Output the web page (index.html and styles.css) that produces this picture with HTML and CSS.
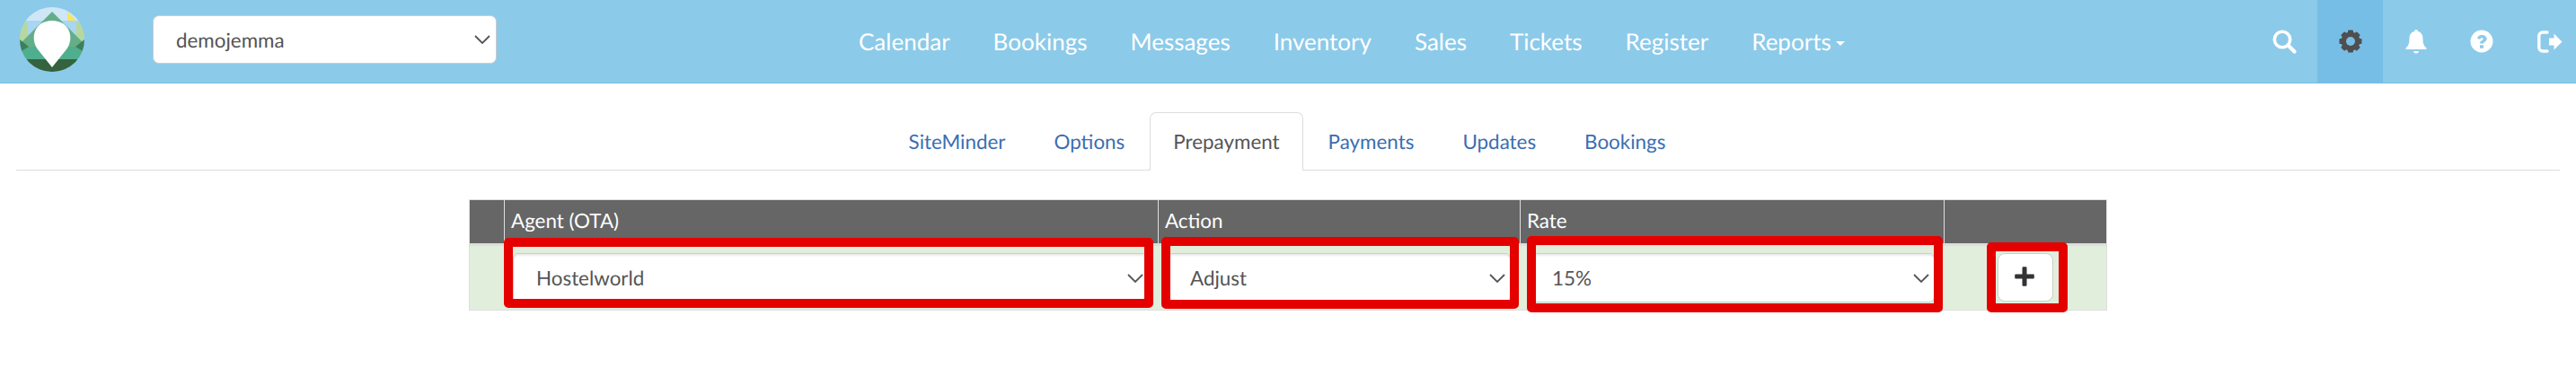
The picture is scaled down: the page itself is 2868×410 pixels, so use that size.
FILE: index.html
```html
<!DOCTYPE html>
<html lang="en">
<head>
<meta charset="utf-8">
<title>Prepayment</title>
<link rel="stylesheet" href="styles.css">
</head>
<body>
<header class="navbar">
  <svg class="logo" width="72" height="72" viewBox="0 0 72 72">
    <defs><clipPath id="logo-clip"><circle cx="36" cy="36" r="36"/></clipPath></defs>
    <g clip-path="url(#logo-clip)">
      <rect width="72" height="72" fill="#a9d6f2"/>
      <rect width="72" height="15" fill="#cfe6f7"/>
      <polygon points="53,5 62,14 62,15 53,15" fill="#f6e65a"/>
      <rect x="0" y="17" width="9" height="20" fill="#b7d89c"/>
      <rect x="63" y="17" width="9" height="20" fill="#b7d89c"/>
      <polygon points="36,5 72,41 72,72 0,72 0,41" fill="#63ae88"/>
      <rect x="0" y="44" width="72" height="20" fill="#4fae8d"/>
      <polygon points="0,36 10,44 0,50" fill="#3f7f58"/>
      <polygon points="72,36 62,44 72,50" fill="#3f7f58"/>
      <rect x="0" y="58" width="72" height="14" fill="#35633f"/>
      <path d="M36 67 L20 47 C11 35 16 15 36 15 C56 15 61 35 52 47 Z" fill="#fff"/>
    </g>
  </svg>
  <select class="site-select"><option>demojemma</option></select>
  <nav class="main-nav">
    <a class="main-link">Calendar</a>
    <a class="main-link">Bookings</a>
    <a class="main-link">Messages</a>
    <a class="main-link">Inventory</a>
    <a class="main-link">Sales</a>
    <a class="main-link">Tickets</a>
    <a class="main-link">Register</a>
    <a class="main-link">Reports<span class="caret"></span></a>
  </nav>
  <div class="icon-nav">
    <a class="icon-link">
      <svg width="27" height="27" viewBox="0 0 27 27"><circle cx="11" cy="11" r="8.7" fill="none" stroke="#fff" stroke-width="3.6"/><line x1="17.5" y1="17.5" x2="24.5" y2="24.5" stroke="#fff" stroke-width="4.2" stroke-linecap="round"/></svg>
    </a>
    <a class="icon-link active">
      <svg width="26" height="26" viewBox="0 0 26 26">
        <g fill="#4f4f4f">
          <rect x="10" y="0.5" width="6" height="25" rx="1"/>
          <rect x="10" y="0.5" width="6" height="25" rx="1" transform="rotate(45 13 13)"/>
          <rect x="10" y="0.5" width="6" height="25" rx="1" transform="rotate(90 13 13)"/>
          <rect x="10" y="0.5" width="6" height="25" rx="1" transform="rotate(135 13 13)"/>
        </g>
        <circle cx="13" cy="13" r="8" fill="none" stroke="#4f4f4f" stroke-width="5"/>
        <circle cx="13" cy="13" r="5" fill="#76bee6"/>
      </svg>
    </a>
    <a class="icon-link">
      <svg width="24" height="27" viewBox="0 0 24 27"><path fill="#fff" d="M12 0 C13.2 0 14 .8 14 2 C18 3 19.5 6 19.5 10 C19.5 16 21 18.5 23.5 20.5 C23.9 21 23.5 22 22.8 22 L1.2 22 C.5 22 .1 21 .5 20.5 C3 18.5 4.5 16 4.5 10 C4.5 6 6 3 10 2 C10 .8 10.8 0 12 0 Z M9 24 L15 24 C14.5 26 13.3 26.6 12 26.6 C10.7 26.6 9.500 26 9 24 Z"/></svg>
    </a>
    <a class="icon-link">
      <svg width="26" height="26" viewBox="0 0 26 26"><path fill="#fff" fill-rule="evenodd" d="M13 .5 A12.500 12.500 0 1 1 13 25.500 A12.500 12.500 0 1 1 13 .5 Z M8 10 L11.300 10.800 C11.500 9.700 12 9.200 13 9.200 C14 9.200 14.600 9.700 14.600 10.400 C14.600 11.200 13.800 11.600 12.900 12.200 C11.700 13 11 13.800 11 15.500 L15 15.500 C15 14.700 15.500 14.300 16.400 13.700 C17.600 12.900 18.600 11.900 18.600 10.200 C18.600 7.500 16.200 5.900 13.100 5.900 C10.300 5.900 8.500 7.400 8 10 Z M11 17.200 L11 20.800 L15 20.800 L15 17.200 Z"/></svg>
    </a>
    <a class="icon-link logout">
      <svg width="28" height="25" viewBox="0 0 28 25"><path fill="none" stroke="#fff" stroke-width="3.4" stroke-linecap="round" d="M11 2 L6 2 C3.500 2 1.800 3.700 1.800 6.200 L1.800 18.800 C1.800 21.300 3.500 23 6 23 L11 23"/><path fill="#fff" d="M13 8.500 L18.500 8.500 L18.500 3.500 L27.500 12.500 L18.500 21.500 L18.500 16.500 L13 16.500 Z"/></svg>
    </a>
  </div>
</header>

<main class="content">
  <ul class="tabs">
    <li class="tab">SiteMinder</li>
    <li class="tab">Options</li>
    <li class="tab current">Prepayment</li>
    <li class="tab">Payments</li>
    <li class="tab">Updates</li>
    <li class="tab">Bookings</li>
  </ul>

  <div class="table">
    <div class="th"></div>
    <div class="th">Agent (OTA)</div>
    <div class="th">Action</div>
    <div class="th">Rate</div>
    <div class="th"></div>

    <div class="td"></div>
    <div class="td"><select class="field"><option>Hostelworld</option></select></div>
    <div class="td"><select class="field"><option>Adjust</option></select></div>
    <div class="td"><select class="field"><option>15%</option></select></div>
    <div class="td td-center">
      <button class="add-btn" type="button" aria-label="Add">
        <svg width="22" height="22" viewBox="0 0 22 22"><path fill="#333" d="M8.500 1.500 C8.500 .7 9 .2 9.800 .2 L12.200 .2 C13 .2 13.500 .7 13.500 1.500 L13.500 8.500 L20.500 8.500 C21.300 8.500 21.800 9 21.800 9.800 L21.800 12.200 C21.800 13 21.300 13.500 20.500 13.500 L13.500 13.500 L13.500 20.500 C13.500 21.300 13 21.800 12.200 21.800 L9.800 21.800 C9 21.800 8.500 21.300 8.500 20.500 L8.500 13.500 L1.500 13.500 C.7 13.500 .2 13 .2 12.200 L.2 9.800 C.2 9 .7 8.500 1.500 8.500 L8.500 8.500 Z"/></svg>
      </button>
    </div>

    <div class="mark mark-agent"></div>
    <div class="mark mark-action"></div>
    <div class="mark mark-rate"></div>
    <div class="mark mark-add"></div>
  </div>
</main>
</body>
</html>
```

FILE: styles.css
```css
* { box-sizing: border-box; }

html, body {
  margin: 0;
  padding: 0;
  background: #fff;
  overflow: hidden;
}

body {
  font-family: Lato, "Open Sans", sans-serif;
  color: #555;
  width: 2868px;
  height: 410px;
  text-rendering: geometricPrecision;
}

.navbar {
  display: flex;
  align-items: center;
  height: 93px;
  background: #8ccae9;
  border-bottom: 1px solid #76bee6;
}

.logo {
  flex: none;
  margin-left: 22px;
  margin-top: -4px;
}

.site-select {
  flex: none;
  width: 383px;
  height: 54px;
  margin-left: 76px;
  margin-top: -4px;
  padding: 0 25px;
  font: 22.4px Lato, sans-serif;
  text-rendering: geometricPrecision;
  color: #555;
  background: #fff url("data:image/svg+xml,%3Csvg xmlns='http://www.w3.org/2000/svg' width='18' height='10' viewBox='0 0 18 10'%3E%3Cpath d='M1 1l8 8 8-8' fill='none' stroke='%23555' stroke-width='1.800'/%3E%3C/svg%3E") no-repeat right 6px center;
  border: 1px solid #ccc;
  border-radius: 7px;
  appearance: none;
}

.main-nav {
  display: flex;
  margin-left: 379px;
}

.main-link {
  padding: 0 24px;
  font-size: 26px;
  line-height: 91px;
  color: #fff;
  white-space: nowrap;
}

.caret {
  display: inline-block;
  margin-left: 5px;
  vertical-align: middle;
  border-top: 5px solid #fff;
  border-left: 5px solid transparent;
  border-right: 5px solid transparent;
}

.icon-nav {
  display: flex;
  margin-left: auto;
  align-self: stretch;
}

.icon-link {
  display: flex;
  align-items: center;
  justify-content: center;
  width: 73px;
}

.icon-link svg { display: block; }

.icon-link.active { background: #76bee6; }

.icon-link.logout {
  width: 69px;
  justify-content: flex-start;
  padding-left: 26px;
}

.content {
  padding: 32px 18px 0;
}

.tabs {
  display: flex;
  justify-content: center;
  list-style: none;
  margin: 0;
  padding: 0;
  height: 65px;
  border-bottom: 1px solid #ddd;
}

.tab {
  height: 65px;
  margin-right: 2px;
  padding: 0 25px;
  border: 1px solid transparent;
  border-bottom: 0;
  border-radius: 7px 7px 0 0;
  font-size: 22.4px;
  line-height: 63px;
  color: #3c6eaf;
}

.tab.current {
  background: #fff;
  color: #555;
  border-color: #ddd;
}

.table {
  position: relative;
  display: grid;
  grid-template-columns: 38px 728px 403px 472px 181px;
  grid-template-rows: 51px 71px;
  width: 1824px;
  margin: 32px 0 0 504px;
  border: 1px solid #ddd;
}

.th {
  height: 51px;
  padding: 3px 7px 0;
  background: #666;
  border-bottom: 3px solid #ddd;
  border-left: 1px solid #ddd;
  font-size: 22.4px;
  line-height: 40px;
  color: #fff;
}

.th:first-child { border-left: 0; }

.td {
  padding: 8px 10px 0;
  background: #e2eedc;
}

.td-center {
  display: flex;
  justify-content: center;
  align-items: flex-start;
}

.field {
  display: block;
  width: 100%;
  height: 55px;
  padding: 0 25px;
  font: 22.4px Lato, sans-serif;
  text-rendering: geometricPrecision;
  color: #555;
  background: #fff url("data:image/svg+xml,%3Csvg xmlns='http://www.w3.org/2000/svg' width='18' height='10' viewBox='0 0 18 10'%3E%3Cpath d='M1 1l8 8 8-8' fill='none' stroke='%23555' stroke-width='1.800'/%3E%3C/svg%3E") no-repeat right 5px center;
  border: 1px solid #ccc;
  border-radius: 6px;
  box-shadow: inset 0 2px 2px rgba(0, 0, 0, 0.075);
  appearance: none;
}

.add-btn {
  display: flex;
  align-items: center;
  justify-content: center;
  width: 62px;
  height: 54px;
  padding: 0 2px 2px 0;
  background: #fff;
  border: 1px solid #ccc;
  border-radius: 8px;
}

.mark {
  position: absolute;
  border: 10px solid #e50000;
  border-radius: 5px;
}

.mark-agent { left: 38px; top: 42px; width: 723px; height: 78px; }
.mark-action { left: 770px; top: 41px; width: 398px; height: 80px; }
.mark-rate { left: 1177px; top: 40px; width: 463px; height: 85px; }
.mark-add { left: 1689px; top: 47px; width: 90px; height: 78px; }
```
